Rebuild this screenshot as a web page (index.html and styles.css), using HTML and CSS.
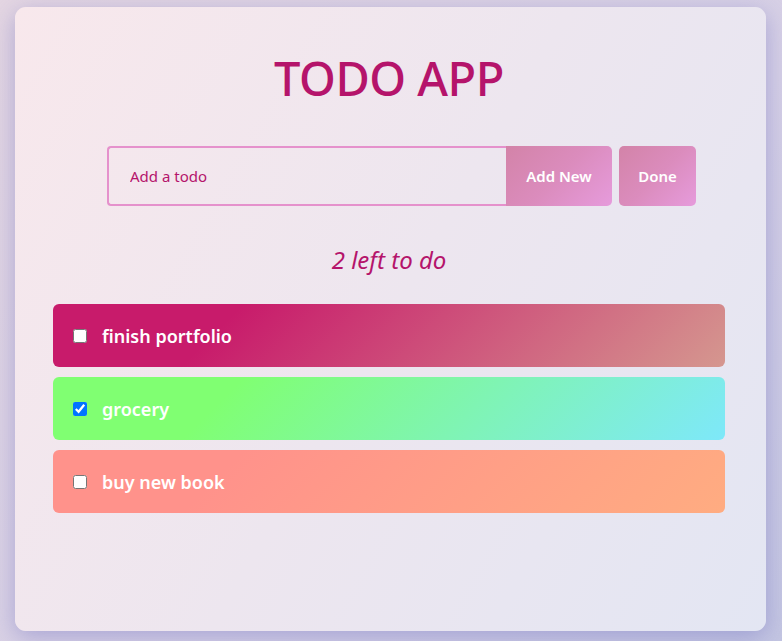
FILE: index.html
```html
<!DOCTYPE html>
<html lang="en">
<head>
<meta charset="utf-8">
<title>Todo App</title>
<link rel="stylesheet" href="styles.css">
</head>
<body>
<main class="card">
  <h1 class="title">TODO APP</h1>
  <form class="add-form">
    <input class="todo-input" type="text" placeholder="Add a todo">
    <button type="button" class="btn btn-add">Add New</button>
    <button type="button" class="btn btn-done">Done</button>
  </form>
  <p class="count">2 left to do</p>
  <ul class="todos">
    <li class="todo todo-pink"><input type="checkbox" class="check"><span class="label">finish portfolio</span></li>
    <li class="todo todo-green"><input type="checkbox" class="check" checked><span class="label">grocery</span></li>
    <li class="todo todo-peach"><input type="checkbox" class="check"><span class="label">buy new book</span></li>
  </ul>
</main>
</body>
</html>
```

FILE: styles.css
```css
html, body {
  margin: 0;
  padding: 0;
}
body {
  height: 641px;
  overflow: hidden;
  background: linear-gradient(135deg, #e4d6e2 0%, #d6d0e6 60%, #c4c6e2 100%);
  font-family: "Noto Sans", "Open Sans", sans-serif;
  padding: 7px 16px 10px 15px;
  box-sizing: border-box;
}
.card {
  height: 624px;
  box-sizing: border-box;
  border-radius: 11px;
  background: linear-gradient(120deg, #f8e8ec 0%, #ede6ef 50%, #e3e6f3 100%);
  box-shadow: 0 6px 24px rgba(110, 110, 190, 0.45);
  padding: 42px 41px 0 38px;
  display: flex;
  flex-direction: column;
}
.title {
  margin: 0;
  text-align: center;
  font-size: 47px;
  font-weight: 500;
  line-height: 58px;
  color: #b5146b;
  letter-spacing: -0.5px;
}
.add-form {
  display: flex;
  margin: 39px 0 0 54px;
  height: 60px;
}
.todo-input {
  width: 399px;
  box-sizing: border-box;
  height: 60px;
  border: 2px solid #e591cc;
  border-right: none;
  border-radius: 4px 0 0 4px;
  background: transparent;
  padding: 0 0 0 21px;
  font-family: inherit;
  font-size: 15px;
  color: #b5146b;
  outline: none;
}
.todo-input::placeholder {
  color: #b5146b;
  opacity: 1;
}
.btn {
  border: none;
  height: 60px;
  color: #fff;
  font-family: inherit;
  font-size: 15px;
  font-weight: 600;
  background: linear-gradient(135deg, #d383a8 0%, #db8cbd 50%, #e69bdc 100%);
  padding: 0;
}
.btn-add {
  width: 106px;
  border-radius: 0 5px 5px 0;
}
.btn-done {
  width: 77px;
  margin-left: 7px;
  border-radius: 5px;
}
.count {
  margin: 38px 0 0;
  text-align: center;
  font-style: italic;
  font-size: 24px;
  line-height: 31px;
  color: #b5146b;
}
.todos {
  list-style: none;
  margin: 29px 0 0;
  padding: 0;
  width: 672px;
  display: flex;
  flex-direction: column;
  gap: 10px;
}
.todo {
  height: 63px;
  border-radius: 6px;
  display: flex;
  align-items: center;
  padding-left: 20px;
  box-sizing: border-box;
}
.todo-pink {
  background: linear-gradient(315deg, #d5978f 0%, #c81b6b 74%);
}
.todo-green {
  background: linear-gradient(315deg, #7ee8fa 0%, #80ff72 74%);
}
.todo-peach {
  background: linear-gradient(315deg, #ffac81 0%, #ff928b 74%);
}
.check {
  width: 14px;
  height: 14px;
  margin: 0 15px 0 0;
}
.label {
  color: #fff;
  font-size: 18px;
  font-weight: 600;
}
```
